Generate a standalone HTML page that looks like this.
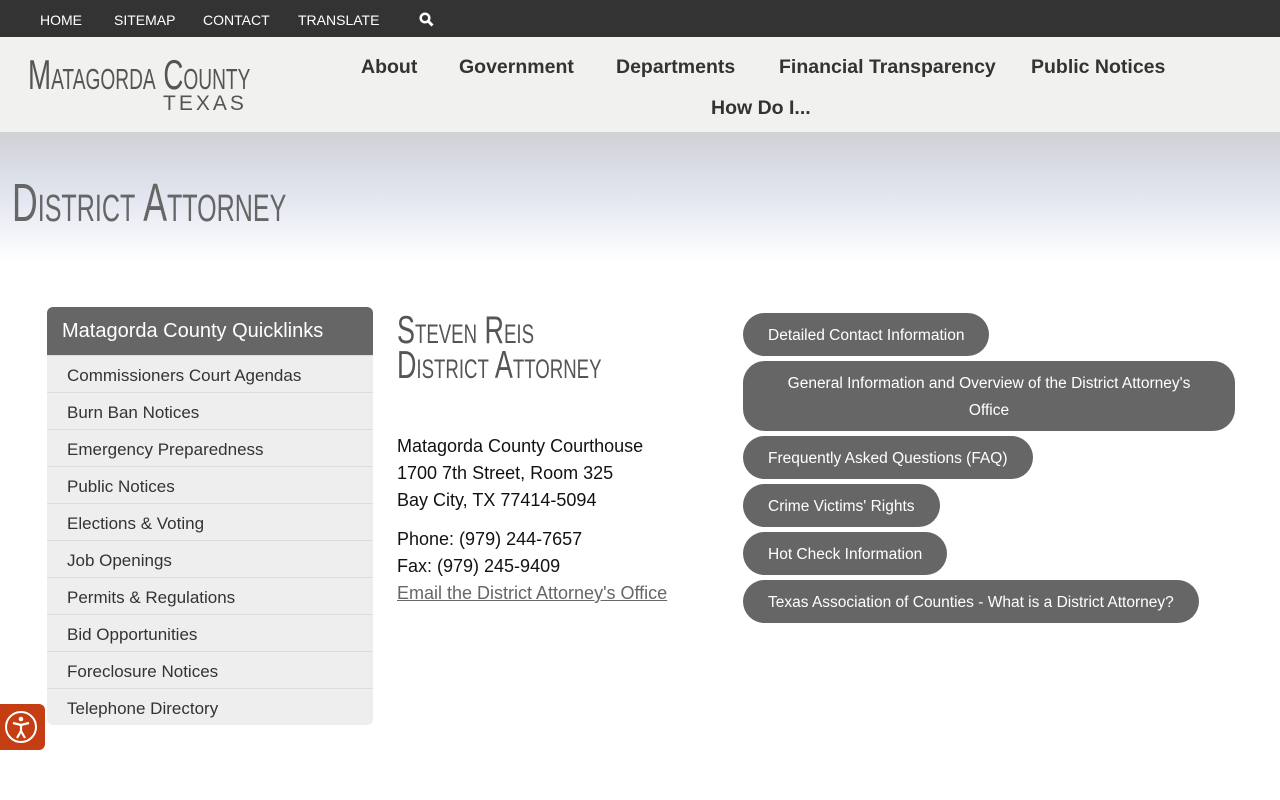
<!DOCTYPE html>
<html><head><meta charset="utf-8"><style>
*{margin:0;padding:0;box-sizing:border-box}
body{width:1280px;height:800px;overflow:hidden;background:#fff;font-family:"Liberation Sans",sans-serif;color:#222}
.top{height:37px;background:#333;color:#fff;font-size:14px;position:relative}
.top span{position:absolute;top:12px}
.hdr{height:95px;background:#f1f1ef;position:relative}
.cond{font-family:"Liberation Sans Narrow","Liberation Sans",sans-serif;font-variant:small-caps;display:inline-block;transform-origin:left top;white-space:nowrap}
.nav{position:absolute;font-weight:bold;font-size:19.5px;color:#333}
.hero{height:130px;background:linear-gradient(#cfd1d5,#e2e6f0 50%,#fff)}
.ql{position:absolute;left:47px;top:307px;width:326px}
.qlh{background:#666;color:#fff;font-size:20px;height:48px;line-height:48px;padding-left:15px;border-radius:6px 6px 0 0}
.qli{background:#eee;height:37px;line-height:39px;padding-left:20px;font-size:17px;color:#333;border-top:1px solid #ddd}
.btn{position:absolute;left:743px;background:#666;color:#fff;font-size:15.5px;border-radius:22px;height:43px;line-height:45px;padding:0 25px}
.info{position:absolute;left:397px;font-size:18px;line-height:27px;color:#111}
</style></head><body>
<div class="top"><span style="left:40px">HOME</span><span style="left:114px">SITEMAP</span><span style="left:203px">CONTACT</span><span style="left:298px">TRANSLATE</span>
<svg style="position:absolute;left:419px;top:12px" width="15" height="15" viewBox="0 0 15 15"><circle cx="6" cy="6" r="4.3" fill="none" stroke="#fff" stroke-width="2.5"/><path d="M9 9l4.5 4.5" stroke="#fff" stroke-width="3"/></svg></div>
<div class="hdr">
<div class="cond" style="position:absolute;left:28px;top:14px;font-size:42px;color:#555;transform:scaleX(.66)">Matagorda County</div>
<div style="position:absolute;left:163px;top:55px;font-size:21px;letter-spacing:3px;color:#555">TEXAS</div>
<span class="nav" style="left:361px;top:19px">About</span>
<span class="nav" style="left:459px;top:19px">Government</span>
<span class="nav" style="left:616px;top:19px">Departments</span>
<span class="nav" style="left:779px;top:19px">Financial Transparency</span>
<span class="nav" style="left:1031px;top:19px">Public Notices</span>
<span class="nav" style="left:711px;top:60px">How Do I...</span>
</div>
<div class="hero"><div class="cond" style="position:absolute;left:12px;top:172px;font-size:54px;color:#666;transform:scaleX(.66)">District Attorney</div></div>
<div class="ql"><div class="qlh">Matagorda County Quicklinks</div>
<div class="qli">Commissioners Court Agendas</div><div class="qli">Burn Ban Notices</div><div class="qli">Emergency Preparedness</div><div class="qli">Public Notices</div><div class="qli">Elections &amp; Voting</div><div class="qli">Job Openings</div><div class="qli">Permits &amp; Regulations</div><div class="qli">Bid Opportunities</div><div class="qli">Foreclosure Notices</div><div class="qli" style="border-radius:0 0 6px 6px">Telephone Directory</div></div>
<div class="cond" style="position:absolute;left:397px;top:313px;font-size:39px;line-height:35px;color:#555;transform:scaleX(.69)">Steven Reis<br>District Attorney</div>
<div class="info" style="top:433px">Matagorda County Courthouse<br>1700 7th Street, Room 325<br>Bay City, TX 77414-5094</div>
<div class="info" style="top:526px">Phone: (979) 244-7657<br>Fax: (979) 245-9409<br><span style="color:#666;text-decoration:underline">Email the District Attorney's Office</span></div>
<div class="btn" style="top:313px">Detailed Contact Information</div>
<div class="btn" style="top:361px;width:492px;height:70px;line-height:27px;padding-top:9px;text-align:center">General Information and Overview of the District Attorney's Office</div>
<div class="btn" style="top:436px">Frequently Asked Questions (FAQ)</div>
<div class="btn" style="top:484px">Crime Victims' Rights</div>
<div class="btn" style="top:532px">Hot Check Information</div>
<div class="btn" style="top:580px">Texas Association of Counties - What is a District Attorney?</div>
<div style="position:absolute;left:0;top:704px;width:45px;height:46px;background:#c53d12;border-radius:0 6px 6px 0">
<svg width="45" height="46" viewBox="0 0 45 46"><circle cx="21" cy="23" r="15" fill="none" stroke="#fff" stroke-width="2"/><circle cx="21" cy="15" r="2.3" fill="#fff"/><path d="M13 19l8 2 8-2M21 21v6l-4 7M21 27l4 7" stroke="#fff" stroke-width="2.2" fill="none"/></svg></div>
</body></html>
